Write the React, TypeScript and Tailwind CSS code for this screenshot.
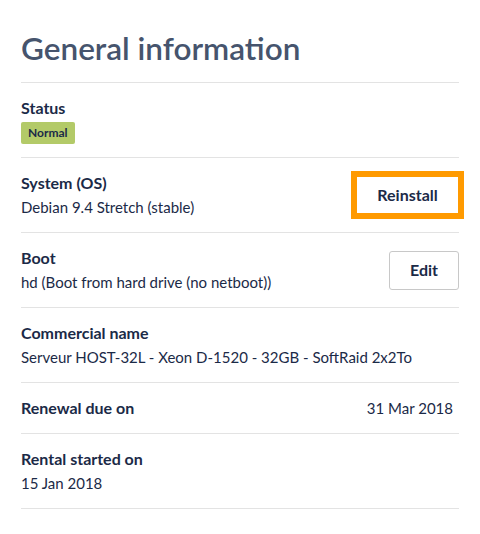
import React from 'react';

const font = { fontFamily: 'Lato, "Open Sans", sans-serif' };

const Row: React.FC<{ children: React.ReactNode; className?: string }> = ({ children, className = '' }) => (
  <div className={`border-t border-[#e3e3e3] py-[13px] flex items-center justify-between ${className}`}>{children}</div>
);

const Value: React.FC<{ children: React.ReactNode; className?: string }> = ({ children, className = '' }) => (
  <div className={`text-[15px] leading-[24px] ${className}`}>{children}</div>
);

export default function App() {
  return (
    <div className="w-[480px] h-[534px] bg-white text-[#1b2a47]" style={font}>
      <div className="px-[21px] pt-[28px]">
        <h1 className="text-[31.5px] leading-[40px] font-semibold text-[#46546d] pb-[14px]">General information</h1>

        <Row>
          <div>
            <div className="text-[16px] leading-[24px] font-bold">Status</div>
            <div className="h-[24px] flex items-end">
              <span className="inline-flex items-center h-[22px] px-[7px] rounded-[2px] bg-[#b3ca68] text-[12px] font-bold">
                Normal
              </span>
            </div>
          </div>
        </Row>

        <Row>
          <div>
            <div className="text-[16px] leading-[24px] font-bold">System (OS)</div>
            <Value>Debian 9.4 Stretch (stable)</Value>
          </div>
          <button className="w-[103px] h-[38px] bg-white text-[16px] font-bold text-[#1b2a47] outline-[6px] outline-solid outline-offset-[-1px] outline-[#ff9a00]">
            Reinstall
          </button>
        </Row>

        <Row>
          <div>
            <div className="text-[16px] leading-[24px] font-bold">Boot</div>
            <Value>hd (Boot from hard drive (no netboot))</Value>
          </div>
          <button className="w-[70px] h-[39px] bg-white border border-[#c8c8c8] rounded-[3px] text-[16px] font-bold text-[#1b2a47]">
            Edit
          </button>
        </Row>

        <Row>
          <div>
            <div className="text-[16px] leading-[24px] font-bold">Commercial name</div>
            <Value>Serveur HOST-32L - Xeon D-1520 - 32GB - SoftRaid 2x2To</Value>
          </div>
        </Row>

        <Row>
          <div className="text-[16px] leading-[24px] font-bold">Renewal due on</div>
          <Value className="pr-[6px]">31 Mar 2018</Value>
        </Row>

        <Row className="border-b">
          <div>
            <div className="text-[16px] leading-[24px] font-bold">Rental started on</div>
            <Value>15 Jan 2018</Value>
          </div>
        </Row>
      </div>
    </div>
  );
}
